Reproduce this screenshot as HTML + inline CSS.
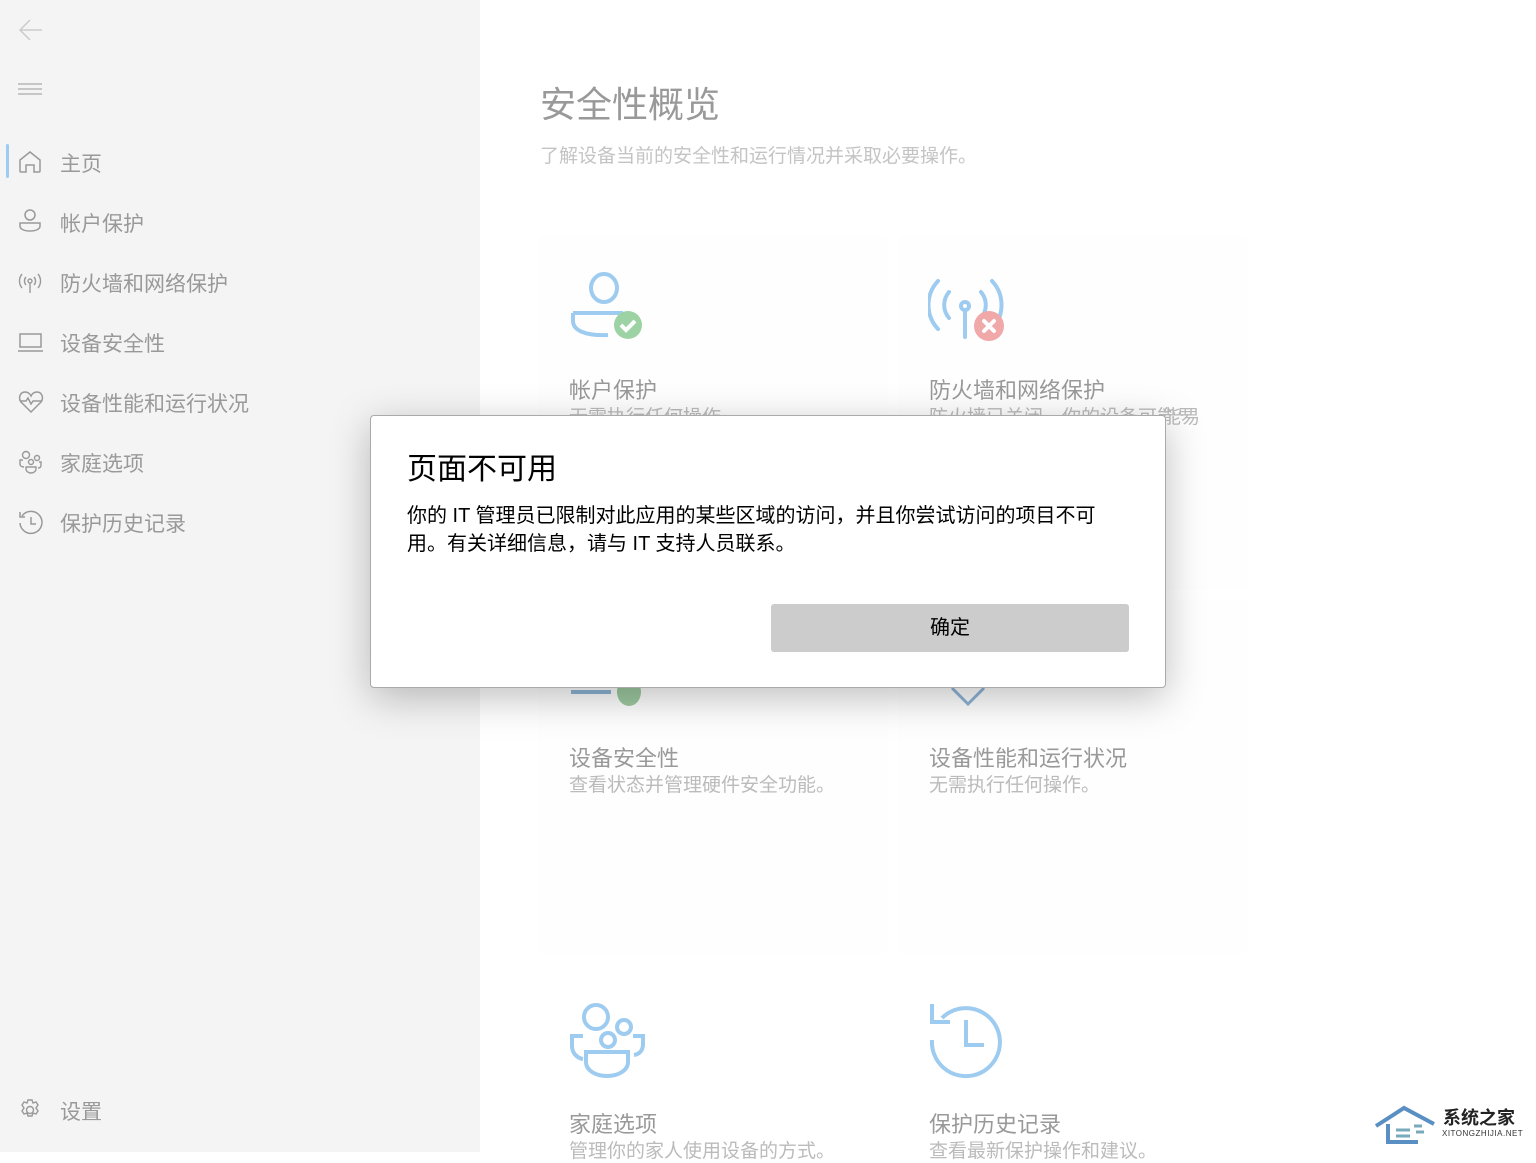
<!DOCTYPE html>
<html><head><meta charset="utf-8"><style>
*{margin:0;padding:0;box-sizing:border-box}
body{width:1536px;height:1152px;overflow:hidden;background:#fff;font-family:"Liberation Sans","Noto Sans CJK SC",sans-serif;position:relative}
.side{position:absolute;left:0;top:0;width:480px;height:1152px;background:#f4f4f4}
.nav{position:absolute;left:60px;font-size:21px;color:#999}
.ic{position:absolute;left:18px}
.t{position:absolute;color:#999}
.card{position:absolute;background:#fefefe;box-shadow:0 0 3px rgba(0,0,0,0.02)}
.ct{position:absolute;font-size:22px;color:#999}
.cs{position:absolute;font-size:19px;color:#bbb}
.dlg{position:absolute;left:370px;top:415px;width:796px;height:273px;background:#fff;border:1px solid #aaa;border-radius:4px;box-shadow:0 10px 40px rgba(0,0,0,0.25)}
</style></head><body>
<div class="side">
<svg class="ic" style="top:18px" width="26" height="26" viewBox="0 0 26 26" fill="none" stroke="#ccc" stroke-width="1.5"><path d="M24 12H2M12 2L2 12l10 10"/></svg>
<svg class="ic" style="top:82px" width="26" height="16" fill="none" stroke="#aaa" stroke-width="1.2"><path d="M0 2h24M0 7h24M0 12h24"/></svg>
<div style="position:absolute;left:6px;top:144px;width:3px;height:34px;background:#9ecbf0;border-radius:2px"></div>
<svg class="ic" style="top:150px" width="24" height="24" fill="none" stroke="#999" stroke-width="1.5"><path d="M2 10L12 2l10 8v11a1 1 0 0 1-1 1h-5v-7h-8v7H3a1 1 0 0 1-1-1z"/></svg>
<div class="nav" style="top:148px">主页</div>
<svg class="ic" style="top:208px" width="24" height="26" fill="none" stroke="#999" stroke-width="1.5"><circle cx="12" cy="7" r="5"/><path d="M2 15h20v3c0 3-4 5-10 5S2 21 2 18z"/></svg>
<div class="nav" style="top:208px">帐户保护</div>
<svg class="ic" style="top:270px" width="24" height="26" fill="none" stroke="#999" stroke-width="1.4"><path d="M4 4a11 11 0 0 0 0 14M20 4a11 11 0 0 1 0 14M8 7a6 6 0 0 0 0 8M16 7a6 6 0 0 1 0 8M12 13v10"/><circle cx="12" cy="11" r="2"/></svg>
<div class="nav" style="top:268px">防火墙和网络保护</div>
<svg class="ic" style="top:332px" width="26" height="22" fill="none" stroke="#999" stroke-width="1.5"><rect x="2" y="2" width="21" height="13"/><path d="M0 19h25"/></svg>
<div class="nav" style="top:328px">设备安全性</div>
<svg class="ic" style="top:390px" width="26" height="24" fill="none" stroke="#999" stroke-width="1.5"><path d="M13 22L3 12C0 8 2 2 7 2c3 0 5 2 6 4 1-2 3-4 6-4 5 0 7 6 4 10z"/><path d="M2 11h6l2-3 3 6 2-3h9"/></svg>
<div class="nav" style="top:388px">设备性能和运行状况</div>
<svg class="ic" style="top:450px" width="26" height="26" fill="none" stroke="#999" stroke-width="1.4"><circle cx="8" cy="5" r="3.5"/><circle cx="19" cy="8" r="2.5"/><circle cx="13" cy="12" r="2.5"/><path d="M5 10H2v4c0 2 2 3 4 3M21 12h2v3c0 2-1 3-3 3M8 17h10v2c0 2-2 4-5 4s-5-2-5-4z"/></svg>
<div class="nav" style="top:448px">家庭选项</div>
<svg class="ic" style="top:510px" width="26" height="26" fill="none" stroke="#999" stroke-width="1.5"><path d="M4 6A11 11 0 1 1 2 13M2 2v5h5M13 7v7h5"/></svg>
<div class="nav" style="top:508px">保护历史记录</div>
<svg class="ic" style="top:1098px" width="24" height="24" fill="none" stroke="#999" stroke-width="1.4"><circle cx="12" cy="12" r="3.5"/><path d="M10 2h4l1 3 3-1 2 3-2 3 2 3-2 3-3-1-1 3h-4l-1-3-3 1-2-3 2-3-2-3 2-3 3 1z"/></svg>
<div class="nav" style="top:1096px">设置</div>
</div>

<div class="t" style="left:540px;top:76px;font-size:36px;color:#999">安全性概览</div>
<div class="t" style="left:540px;top:141px;font-size:19px;color:#c4c4c4">了解设备当前的安全性和运行情况并采取必要操作。</div>

<div class="card" style="left:540px;top:238px;width:346px;height:350px"></div>
<div class="card" style="left:900px;top:238px;width:346px;height:350px"></div>
<div class="card" style="left:540px;top:602px;width:346px;height:350px"></div>
<div class="card" style="left:900px;top:602px;width:346px;height:350px"></div>

<svg style="position:absolute;left:568px;top:266px" width="80" height="80" fill="none" stroke="#9ecbf0" stroke-width="4"><ellipse cx="36" cy="22" rx="13" ry="14"/><path d="M5 47h50M5 47v8c0 10 14 15 35 14"/><circle cx="60" cy="59" r="14" fill="#9dd3a4" stroke="none"/><path d="M53 59l5 5 9-9" stroke="#fff" stroke-width="4"/></svg>
<div class="ct" style="left:569px;top:373px">帐户保护</div>
<div class="cs" style="left:569px;top:402px;height:14px;overflow:hidden">无需执行任何操作。</div>
<svg style="position:absolute;left:928px;top:276px" width="80" height="70" fill="none" stroke="#9ecbf0" stroke-width="4" stroke-linecap="round"><path d="M10 5a35 35 0 0 0 0 48M64 5a35 35 0 0 1 0 48M21 16a20 20 0 0 0 0 26M53 16a20 20 0 0 1 0 26M37 35v26"/><circle cx="37" cy="30" r="4"/><circle cx="61" cy="50" r="15" fill="#f0a8a8" stroke="none"/><path d="M56 45l10 10M66 45l-10 10" stroke="#fff"/></svg>
<div class="ct" style="left:929px;top:373px">防火墙和网络保护</div>
<div class="cs" style="left:929px;top:402px;height:14px;overflow:hidden">防火墙已关闭。你的设备可能易</div>
<div class="cs" style="left:1162px;top:402px">能易</div>

<svg style="position:absolute;left:568px;top:680px" width="80" height="30"><path d="M3 12h40" stroke="#8eb4d6" stroke-width="4"/><ellipse cx="61" cy="12" rx="12" ry="14" fill="#9dc9a0"/></svg>
<svg style="position:absolute;left:950px;top:686px" width="40" height="20" fill="none" stroke="#8eb4d6" stroke-width="3"><path d="M2 2l16 16 16-16"/></svg>
<div class="ct" style="left:569px;top:741px">设备安全性</div>
<div class="cs" style="left:569px;top:770px">查看状态并管理硬件安全功能。</div>
<div class="ct" style="left:929px;top:741px">设备性能和运行状况</div>
<div class="cs" style="left:929px;top:770px">无需执行任何操作。</div>

<svg style="position:absolute;left:568px;top:1002px" width="80" height="78" fill="none" stroke="#9ecbf0" stroke-width="4"><circle cx="28" cy="15" r="12"/><circle cx="56" cy="25" r="7"/><circle cx="40" cy="38" r="7"/><path d="M15 34H4v10c0 7 5 12 11 13M65 34h10v8c0 6-3 10-9 11M18 50h42v10c0 8-9 14-21 14s-21-6-21-14z"/></svg>
<div class="ct" style="left:569px;top:1107px">家庭选项</div>
<div class="cs" style="left:569px;top:1136px">管理你的家人使用设备的方式。</div>
<svg style="position:absolute;left:928px;top:1002px" width="80" height="78" fill="none" stroke="#9ecbf0" stroke-width="4"><path d="M14 16A34 34 0 1 1 4 38M4 2v18h18M38 18v25h18"/></svg>
<div class="ct" style="left:929px;top:1107px">保护历史记录</div>
<div class="cs" style="left:929px;top:1136px">查看最新保护操作和建议。</div>

<div class="dlg">
<div style="position:absolute;left:36px;top:28px;font-size:30px;color:#000">页面不可用</div>
<div style="position:absolute;left:36px;top:86px;width:728px;font-size:20px;line-height:28px;color:#000">你的 IT 管理员已限制对此应用的某些区域的访问，并且你尝试访问的项目不可用。有关详细信息，请与 IT 支持人员联系。</div>
<div style="position:absolute;left:400px;top:188px;width:358px;height:48px;background:#cccccc;border-radius:3px;font-size:20px;color:#000;text-align:center;line-height:48px">确定</div>
</div>

<svg style="position:absolute;left:1374px;top:1104px" width="64" height="40"><path d="M2 22L30 4l30 16" fill="none" stroke="#5a8fc4" stroke-width="4"/><path d="M14 20v18h30" fill="none" stroke="#5a8fc4" stroke-width="4"/><path d="M22 26h14M22 32h14M40 22h8M42 28h8" stroke="#7ab" stroke-width="3"/></svg>
<div style="position:absolute;left:1443px;top:1104px;font-size:18px;font-weight:bold;color:#222">系统之家</div>
<div style="position:absolute;left:1442px;top:1129px;font-size:8px;color:#333;letter-spacing:0.5px">XITONGZHIJIA.NET</div>
</body></html>
